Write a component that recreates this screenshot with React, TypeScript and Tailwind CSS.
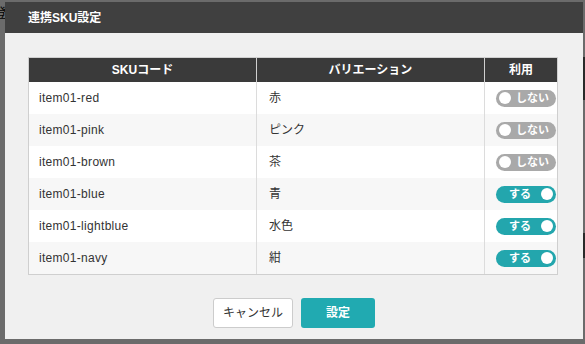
import React from 'react';

type Row = { sku: string; variation: string; enabled: boolean };

const rows: Row[] = [
  { sku: 'item01-red', variation: '赤', enabled: false },
  { sku: 'item01-pink', variation: 'ピンク', enabled: false },
  { sku: 'item01-brown', variation: '茶', enabled: false },
  { sku: 'item01-blue', variation: '青', enabled: true },
  { sku: 'item01-lightblue', variation: '水色', enabled: true },
  { sku: 'item01-navy', variation: '紺', enabled: true },
];

function Toggle({ on }: { on: boolean }) {
  if (on) {
    return (
      <div className="ml-auto flex h-[17px] w-[60px] items-center justify-end gap-[10px] rounded-full bg-[#23a6ad] pr-[3px] text-[11px] font-bold text-white">
        <span>する</span>
        <span className="h-[12px] w-[12px] rounded-full bg-white" />
      </div>
    );
  }
  return (
    <div className="ml-auto flex h-[17px] w-[60px] items-center gap-[5px] rounded-full bg-[#a9a9a9] pl-[3px] text-[11px] font-bold text-white">
      <span className="h-[12px] w-[12px] rounded-full bg-white" />
      <span>しない</span>
    </div>
  );
}

export default function App() {
  return (
    <div
      className="relative h-[344px] w-[585px] overflow-hidden bg-[#6b6b6b]"
      style={{ fontFamily: '"Liberation Sans", "Noto Sans CJK JP", sans-serif' }}
    >
      {/* page behind the overlay */}
      <span className="absolute left-[-6px] top-[3px] text-[13px] text-black">登</span>
      <div className="absolute right-0 top-[57px] h-[43px] w-[2px] bg-[#2a2a2a]" />
      <div className="absolute right-0 top-[233px] h-[25px] w-[2px] bg-[#2a2a2a]" />

      <div className="absolute left-[5px] top-[2px] flex h-[337px] w-[578px] flex-col bg-[#f0f0f0]">
        <div className="flex h-[31px] items-center bg-[#404040] pl-[23px] text-[12px] font-bold text-white">
          連携SKU設定
        </div>

        <div className="px-[23px] pt-[24px]">
          <div className="w-[530px] border border-[#cfcfcf] text-[12px] text-[#333]">
            <div className="flex h-[24px] bg-[#3a3a3a] font-bold text-white">
              <div className="flex w-[228px] items-center justify-center border-r border-[#cfcfcf]">SKUコード</div>
              <div className="flex w-[228px] items-center justify-center border-r border-[#cfcfcf]">バリエーション</div>
              <div className="flex flex-1 items-center justify-center">利用</div>
            </div>
            {rows.map((r, i) => (
              <div key={r.sku} className={`flex h-[32px] ${i % 2 === 1 ? 'bg-[#f7f7f7]' : 'bg-white'}`}>
                <div className="flex w-[228px] items-center border-r border-[#dcdcdc] pl-[10px] tracking-[0.3px]">
                  {r.sku}
                </div>
                <div className="flex w-[228px] items-center border-r border-[#dcdcdc] pl-[12px]">{r.variation}</div>
                <div className="flex flex-1 items-center pr-[1px]">
                  <Toggle on={r.enabled} />
                </div>
              </div>
            ))}
          </div>
        </div>

        <div className="mt-[23px] flex justify-center gap-[8px] text-[12px]">
          <button className="h-[30px] w-[80px] rounded-[3px] border border-[#cccccc] bg-white text-[#333]">
            キャンセル
          </button>
          <button className="h-[30px] w-[74px] rounded-[3px] bg-[#21aab1] font-bold text-white">設定</button>
        </div>
      </div>
    </div>
  );
}
